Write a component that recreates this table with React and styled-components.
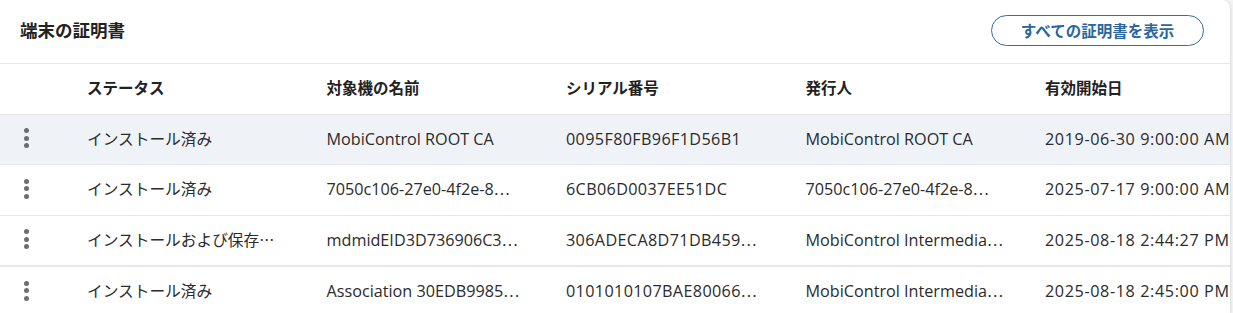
import React from "react";
import styled, { createGlobalStyle } from "styled-components";

const GlobalStyle = createGlobalStyle`
  body {
    margin: 0;
    background: #f4f4f5;
    font-family: "Open Sans", "Noto Sans CJK JP", sans-serif;
    color: #2b2b2b;
  }
`;

const Card = styled.section`
  width: 1230px;
  height: 313px;
  background: #fff;
  border-top-right-radius: 8px;
  box-shadow: 1px 0 0 #e2e2e4, 2px 0 2px rgba(0, 0, 0, 0.04);
  overflow: hidden;
`;

const Header = styled.div`
  display: flex;
  align-items: center;
  justify-content: space-between;
  height: 63px;
  padding: 0 26px 0 20px;
  border-bottom: 1px solid #e6e6e6;
`;

const Title = styled.h2`
  margin: 0 0 4px;
  font-size: 17.5px;
  font-weight: 700;
  color: #222;
`;

const OutlineButton = styled.button`
  width: 213px;
  height: 31px;
  margin-bottom: 2px;
  border: 1px solid #2f6ea6;
  border-radius: 16px;
  background: #fff;
  color: #2a67a0;
  font-family: inherit;
  font-size: 15.5px;
  font-weight: 700;
  cursor: pointer;
`;

const Row = styled.div`
  display: grid;
  grid-template-columns: 72px repeat(5, 239.5px);
  height: 49.5px;
  align-items: center;
  border-bottom: ${(p) => (p.$thick ? "2px" : "1px")} solid #e6e6e6;
  background: ${(p) => (p.$active ? "#eff3f8" : "#fff")};
`;

const HeadCell = styled.div`
  padding: 0 24px 2px 15px;
  font-size: 15.5px;
  font-weight: 700;
  color: #222;
  white-space: nowrap;
`;

const Cell = styled.div`
  padding: 0 14px 1px 15px;
  font-size: ${(p) => (p.$cjk ? "15.7px" : "16.2px")};
  line-height: 22px;
  letter-spacing: ${(p) => p.$spacing || 0}px;
  white-space: nowrap;
  overflow: hidden;
  text-overflow: ellipsis;
`;

const Dots = styled.span`
  font-family: "Noto Sans CJK JP", sans-serif;
  font-size: 15px;
  line-height: 0;
  letter-spacing: 0;
`;

const MenuCell = styled.div`
  display: flex;
  justify-content: flex-start;
  padding-left: 24px;
`;

const Kebab = styled.button`
  display: flex;
  flex-direction: column;
  align-items: center;
  gap: 2.5px;
  padding: 0;
  border: 0;
  background: none;
  cursor: pointer;
  margin-top: -2px;

  span {
    width: 5px;
    height: 5px;
    border-radius: 50%;
    background: #6d6d6d;
  }
`;

const columns = ["ステータス", "対象機の名前", "シリアル番号", "発行人", "有効開始日"];
// extra tracking per column, so numbers run as wide as in the original font
const spacing = [0, 0, 0.35, 0, 0.6];

const rows = [
  ["インストール済み", "MobiControl ROOT CA", "0095F80FB96F1D56B1", "MobiControl ROOT CA", "2019-06-30 9:00:00 AM"],
  ["インストール済み", "7050c106-27e0-4f2e-8…", "6CB06D0037EE51DC", "7050c106-27e0-4f2e-8…", "2025-07-17 9:00:00 AM"],
  ["インストールおよび保存…", "mdmidEID3D736906C3…", "306ADECA8D71DB459…", "MobiControl Intermedia…", "2025-08-18 2:44:27 PM"],
  ["インストール済み", "Association 30EDB9985…", "0101010107BAE80066…", "MobiControl Intermedia…", "2025-08-18 2:45:00 PM"],
];

// truncated values end in "…", drawn as centred dots like the original
const renderValue = (v) =>
  v.endsWith("…") ? (
    <>
      {v.slice(0, -1)}
      <Dots>⋯</Dots>
    </>
  ) : (
    v
  );

const App = () => {
  return (
    <>
      <GlobalStyle />
      <Card>
        <Header>
          <Title>端末の証明書</Title>
          <OutlineButton>すべての証明書を表示</OutlineButton>
        </Header>
        <Row>
          <div />
          {columns.map((c) => (
            <HeadCell key={c}>{c}</HeadCell>
          ))}
        </Row>
        {rows.map((r, i) => (
          <Row key={i} $active={i === 0} $thick={i === 2}>
            <MenuCell>
              <Kebab aria-label="menu">
                <span />
                <span />
                <span />
              </Kebab>
            </MenuCell>
            {r.map((v, j) => (
              <Cell key={j} $cjk={j === 0} $spacing={spacing[j]}>
                {renderValue(v)}
              </Cell>
            ))}
          </Row>
        ))}
      </Card>
    </>
  );
};

export default App;
